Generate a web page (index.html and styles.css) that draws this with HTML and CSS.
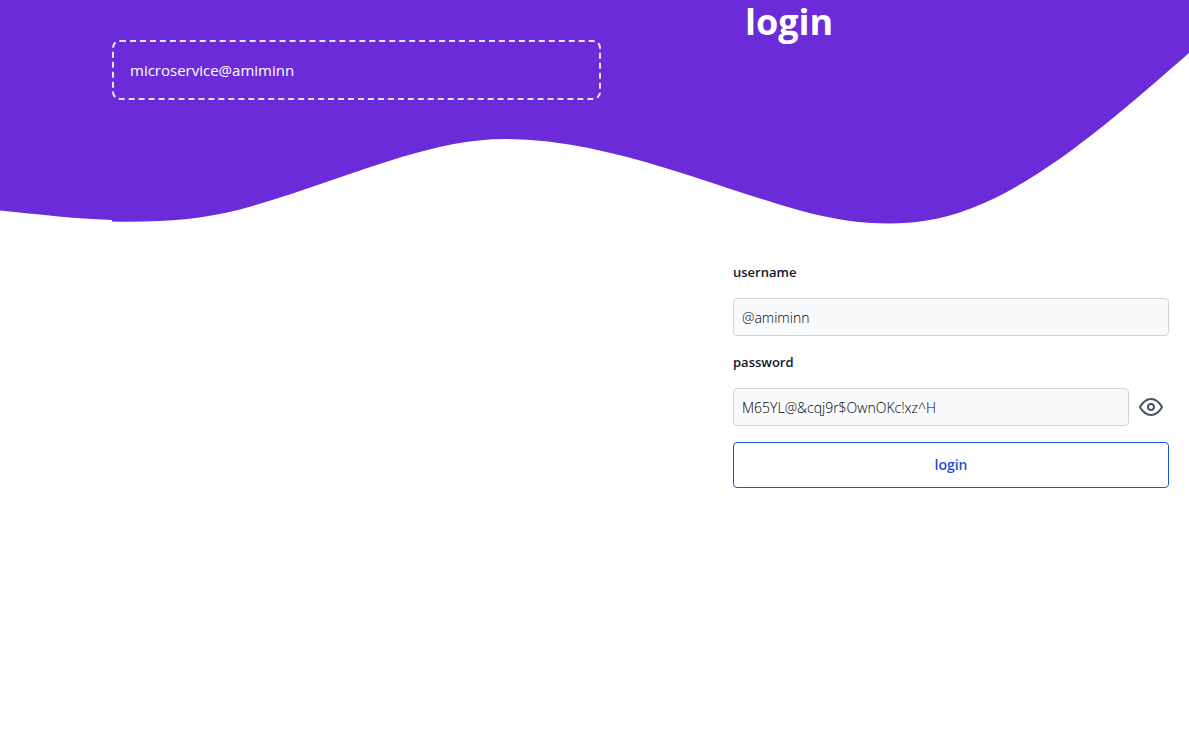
FILE: index.html
```html
<!DOCTYPE html>
<html lang="en">
<head>
<meta charset="utf-8">
<meta name="viewport" content="width=device-width, initial-scale=1">
<title>login</title>
<link rel="stylesheet" href="styles.css">
</head>
<body class="page">
  <svg class="wave" viewBox="0 0 1189 224" preserveAspectRatio="none" aria-hidden="true">
    <path fill="currentColor" d="M0 0V210.500C40 214.500 72 218.500 112 220V221.500C160 222.500 202 219.500 240 209.500C293 195 347 174 400 157.500C435 147 470 139 505 139C559 139 613 152 667 168.500C711 182 756 198 800 210.500C830 219 860 223.500 890 223.500C902 223.500 914 222.500 925 220.800C1012 208 1101 130 1189 53V0Z"/>
  </svg>
  <main class="layout">
    <section class="intro">
      <p class="notice">microservice@amiminn</p>
    </section>
    <section class="panel">
      <h1 class="title">login</h1>
      <form class="form">
        <label class="label" for="username">username</label>
        <input class="input" id="username" type="text" value="@amiminn">
        <label class="label" for="password">password</label>
        <div class="row">
          <input class="input" id="password" type="text" value="M65YL@&amp;cqj9r$OwnOKc!xz^H">
          <button class="toggle" type="button" aria-label="Hide password">
            <svg class="eye" viewBox="0 0 24 24" fill="none" stroke="currentColor" stroke-width="2" stroke-linecap="round" stroke-linejoin="round" aria-hidden="true">
              <path d="M1 12S5 4 12 4S23 12 23 12S19 20 12 20S1 12 1 12Z"/>
              <circle cx="12" cy="12" r="3"/>
            </svg>
          </button>
        </div>
        <button class="submit" type="submit">login</button>
      </form>
    </section>
  </main>
</body>
</html>
```
FILE: styles.css
```css
* {
  box-sizing: border-box;
}

.page {
  margin: 0;
  position: relative;
  background: #fff;
  color: #111827;
  font-family: "Segoe UI", "Open Sans", "Noto Sans", sans-serif;
  font-size: 14px;
  line-height: 20px;
}

.wave {
  position: absolute;
  top: 0;
  left: 0;
  z-index: -1;
  width: 100%;
  height: 224px;
  color: #6c2bd9;
}

.layout {
  display: grid;
  grid-template-columns: 489fr 436fr;
  column-gap: 132px;
  padding: 0 20px 0 112px;
}

.intro {
  padding-top: 40px;
}

.notice {
  margin: 0;
  padding: 16px;
  border: 2px dashed #e5e7eb;
  border-radius: 8px;
  color: #fff;
  font-size: 15px;
  line-height: 24px;
}

.title {
  margin: 0;
  padding: 0 12px;
  color: #fff;
  font-size: 36px;
  font-weight: 700;
  line-height: 44px;
}

.form {
  display: flex;
  flex-direction: column;
  gap: 16px;
  padding-top: 218px;
}

.label {
  font-size: 13px;
  font-weight: 600;
}

.input {
  width: 100%;
  min-width: 0;
  height: 38px;
  padding: 8px;
  border: 1px solid #d1d5db;
  border-radius: 4px;
  background: #f9fafb;
  color: #000;
  font: inherit;
  font-weight: 300;
}

.row {
  display: flex;
  align-items: center;
  gap: 4px;
}

.toggle {
  display: flex;
  padding: 6px;
  border: 0;
  background: none;
  color: #4b5563;
}

.eye {
  width: 24px;
  height: 24px;
}

.submit {
  height: 46px;
  border: 1px solid #1a56db;
  border-radius: 4px;
  background: #fff;
  color: #1d4ed8;
  font: inherit;
  font-weight: 600;
}
```
